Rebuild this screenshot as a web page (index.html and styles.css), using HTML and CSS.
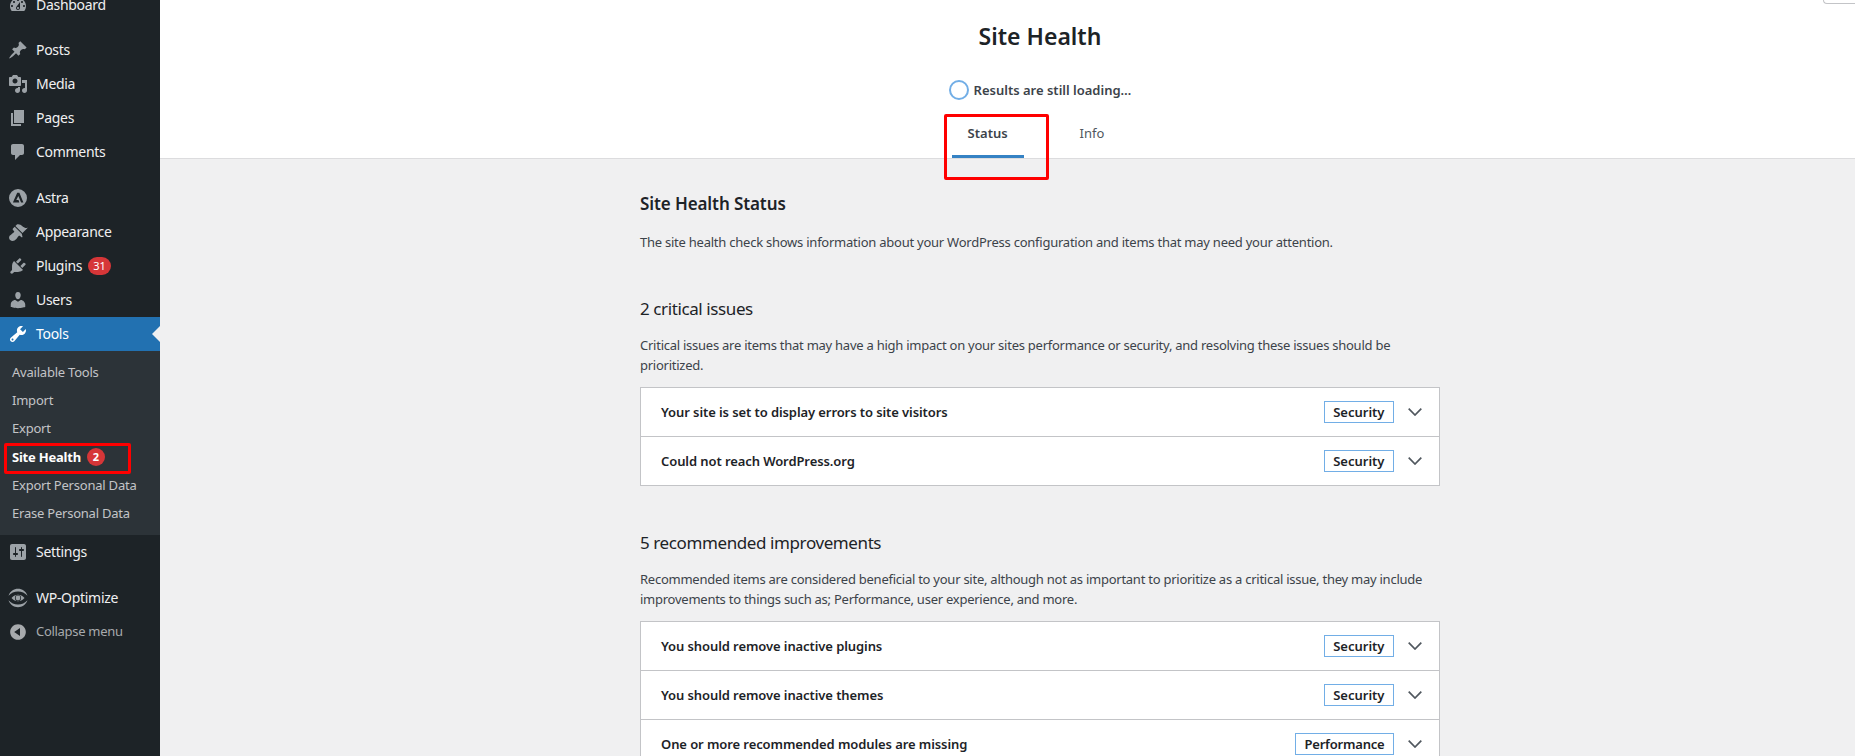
FILE: index.html
```html
<!DOCTYPE html>
<html lang="en">
<head>
<meta charset="utf-8">
<title>Site Health</title>
<link rel="stylesheet" href="styles.css">
</head>
<body>
<aside class="sidebar">
  <ul class="menu">
    <li class="item"><svg class="ico" viewBox="0 0 20 20"><path d="M3.76 16h12.48c1.1-1.37 1.76-3.11 1.76-5 0-4.42-3.58-8-8-8s-8 3.58-8 8c0 1.89.66 3.63 1.76 5zM10 4c.55 0 1 .45 1 1s-.45 1-1 1-1-.45-1-1 .45-1 1-1zM6 6c.55 0 1 .45 1 1s-.45 1-1 1-1-.45-1-1 .45-1 1-1zm8 0c.55 0 1 .45 1 1s-.45 1-1 1-1-.45-1-1 .45-1 1-1zm-5.37 5.55L12 7v6c0 1.1-.9 2-2 2s-2-.9-2-2c0-.57.24-1.08.63-1.45zM4 10c.55 0 1 .45 1 1s-.45 1-1 1-1-.45-1-1 .45-1 1-1zm12 0c.55 0 1 .45 1 1s-.45 1-1 1-1-.45-1-1 .45-1 1-1zm-5 3c0-.55-.45-1-1-1s-1 .45-1 1 .45 1 1 1 1-.45 1-1z" fill-rule="evenodd"/></svg><span>Dashboard</span></li>
    <li class="item sep-first"><svg class="ico" viewBox="0 0 20 20"><path d="M10.44 3.02l1.82-1.82 6.36 6.35-1.83 1.82c-1.05-.68-2.48-.57-3.41.36l-.75.75c-.92.93-1.04 2.35-.35 3.41l-1.83 1.82-2.41-2.41-2.8 2.79c-.42.42-3.38 2.71-3.8 2.29s1.86-3.39 2.28-3.81l2.79-2.79L4.1 9.36l1.83-1.82c1.05.69 2.48.57 3.4-.36l.75-.75c.93-.92 1.05-2.35.36-3.41z"/></svg><span>Posts</span></li>
    <li class="item"><svg class="ico" viewBox="0 0 20 20"><path d="M13 11V4c0-.55-.45-1-1-1h-1.67L9 1H5L3.67 3H2c-.55 0-1 .45-1 1v7c0 .55.45 1 1 1h10c.55 0 1-.45 1-1zM7 4.5c1.38 0 2.5 1.12 2.5 2.5S8.38 9.5 7 9.5 4.5 8.38 4.5 7 5.62 4.5 7 4.5zM14 6h5v10.5c0 1.38-1.12 2.5-2.5 2.5S14 17.88 14 16.5s1.12-2.5 2.5-2.5c.17 0 .34.02.5.05V9h-3V6zm-4 8.05V13h2v3.5c0 1.38-1.12 2.5-2.5 2.5S7 17.88 7 16.5 8.12 14 9.5 14c.17 0 .34.02.5.05z" fill-rule="evenodd"/></svg><span>Media</span></li>
    <li class="item"><svg class="ico" viewBox="0 0 20 20"><path d="M6 15V2h10v13H6zm-1 1h8v2H3V5h2v11z"/></svg><span>Pages</span></li>
    <li class="item"><svg class="ico" viewBox="0 0 20 20"><path d="M5 2h9c1.1 0 2 .9 2 2v7c0 1.1-.9 2-2 2h-2l-5 5v-5H5c-1.1 0-2-.9-2-2V4c0-1.1.9-2 2-2z"/></svg><span>Comments</span></li>
    <li class="item sep"><svg class="ico" viewBox="0 0 20 20"><path d="M10 1a9 9 0 1 0 0 18 9 9 0 0 0 0-18zM9.200 4.800h2.200l4 9.700h-2.300l-2.800-6.600-2 4.200h2.200l.8 2.400H4.900z" fill-rule="evenodd"/></svg><span>Astra</span></li>
    <li class="item"><svg class="ico" viewBox="0 0 20 20"><path d="M14.48 11.06L7.41 3.99l1.5-1.5c.5-.56 2.3-.47 3.51.32 1.21.8 1.43 1.28 2.91 2.1 1.18.64 2.45 1.26 4.45.85zm-.71.71L6.7 4.7 4.93 6.47c-.39.39-.39 1.02 0 1.41l1.06 1.06c.39.39.39 1.03 0 1.42-.6.6-1.43 1.11-2.21 1.69-.35.26-.7.53-1.01.84C1.43 13.23.18 15.7 2.1 17.9c2.2 1.92 4.67.67 6.01-.67.31-.31.58-.66.84-1.01.58-.78 1.09-1.61 1.69-2.21.39-.39 1.03-.39 1.42 0l1.06 1.06c.39.39 1.02.39 1.41 0z"/></svg><span>Appearance</span></li>
    <li class="item"><svg class="ico" viewBox="0 0 20 20"><path d="M13.11 4.36L9.87 7.6 8 5.73l3.24-3.24c.35-.34 1.05-.2 1.56.32.52.51.66 1.21.31 1.55zm-8 1.77l.91-1.12 9.01 9.01-1.19.84c-.71.71-2.63 1.16-3.82 1.16H6.14L4.9 17.26c-.59.59-1.54.59-2.12 0-.59-.58-.59-1.53 0-2.12l1.24-1.24v-3.88c0-1.13.4-3.19 1.09-3.89zm7.26 3.97l3.24-3.24c.34-.35 1.04-.21 1.55.31.52.51.66 1.21.31 1.55l-3.24 3.25z"/></svg><span>Plugins</span><b class="count">31</b></li>
    <li class="item"><svg class="ico" viewBox="0 0 20 20"><path d="M10 9.25c-2.27 0-2.73-3.44-2.73-3.44C7 4.02 7.82 2 9.97 2c2.16 0 2.98 2.02 2.71 3.81 0 0-.41 3.44-2.68 3.44zm0 2.57L12.72 10c2.39 0 4.52 2.33 4.52 4.53v2.49s-3.65 1.13-7.24 1.13c-3.65 0-7.24-1.13-7.24-1.13v-2.49c0-2.25 1.94-4.48 4.47-4.48z"/></svg><span>Users</span></li>
    <li class="item current"><svg class="ico" viewBox="0 0 20 20"><path d="M16.68 9.77c-1.34 1.34-3.3 1.67-4.95.99l-5.41 6.52c-.99.99-2.59.99-3.58 0s-.99-2.59 0-3.57l6.52-5.42c-.68-1.65-.35-3.61.99-4.95 1.28-1.28 3.12-1.62 4.72-1.06l-2.89 2.89 2.82 2.82 2.86-2.87c.53 1.58.18 3.39-1.08 4.65zM3.81 16.21c.4.39 1.04.39 1.43 0 .4-.4.4-1.04 0-1.43-.39-.4-1.03-.4-1.43 0-.39.39-.39 1.03 0 1.43z" fill-rule="evenodd"/></svg><span>Tools</span></li>
    <li class="submenu">
      <div class="sub">Available Tools</div>
      <div class="sub">Import</div>
      <div class="sub">Export</div>
      <div class="sub sub-on">Site Health<b class="count count-sub">2</b></div>
      <div class="sub">Export Personal Data</div>
      <div class="sub">Erase Personal Data</div>
    </li>
    <li class="item"><svg class="ico" viewBox="0 0 20 20"><path d="M18 16V4c0-1.1-.9-2-2-2H4c-1.1 0-2 .9-2 2v12c0 1.1.9 2 2 2h12c1.1 0 2-.9 2-2zM8 11h1c.55 0 1 .45 1 1s-.45 1-1 1H8v1.5c0 .28-.22.5-.5.5s-.5-.22-.5-.5V13H6c-.55 0-1-.45-1-1s.45-1 1-1h1V5.5c0-.28.22-.5.5-.5s.5.22.5.5V11zm5-2h-1c-.55 0-1-.45-1-1s.45-1 1-1h1V5.5c0-.28.22-.5.5-.5s.5.22.5.5V7h1c.55 0 1 .45 1 1s-.45 1-1 1h-1v5.5c0 .28-.22.5-.5.5s-.5-.22-.5-.5V9z" fill-rule="evenodd"/></svg><span>Settings</span></li>
    <li class="item sep"><svg class="ico" viewBox="0 1 20 20"><path d="M.5 8.700C2.300 4 5.800 1.800 10 1.800s7.700 2.200 9.500 6.900c-2.500-2.800-5.700-4.300-9.500-4.300S3 5.900.5 8.700zM.5 13.300C2.300 18 5.800 20.200 10 20.200s7.700-2.200 9.500-6.900c-2.500 2.800-5.700 4.300-9.500 4.300S3 16.100.5 13.300z"/><path d="M3.500 11C5.500 8.800 7.700 7.700 10 7.700s4.500 1.100 6.500 3.300c-2 2.200-4.200 3.300-6.500 3.300S5.500 13.200 3.500 11zM10 7.900a3.100 3.100 0 1 0 0 6.200 3.100 3.100 0 0 0 0-6.200zM10 8.600a2.400 2.400 0 1 1 0 4.800 2.400 2.400 0 0 1 0-4.800z" fill-rule="evenodd"/></svg><span>WP-Optimize</span></li>
    <li class="item collapse"><svg class="ico" viewBox="0 0 20 20"><path d="M10 2.160c4.330 0 7.840 3.510 7.840 7.840s-3.510 7.840-7.840 7.840S2.160 14.330 2.160 10 5.710 2.160 10 2.160zm2 11.720V6.120L6.180 9.970z" fill-rule="evenodd"/></svg><span>Collapse menu</span></li>
  </ul>
</aside>

<main class="page">
  <header class="head">
    <h1 class="title">Site Health</h1>
    <div class="progress"><span class="ring"></span><strong>Results are still loading…</strong></div>
    <nav class="tabs">
      <a class="tab tab-on">Status</a>
      <a class="tab">Info</a>
    </nav>
  </header>
  <section class="body">
    <h2 class="h-status">Site Health Status</h2>
    <p class="lead">The site health check shows information about your WordPress configuration and items that may need your attention.</p>

    <h3 class="h-group">2 critical issues</h3>
    <p class="desc">Critical issues are items that may have a high impact on your sites performance or security, and resolving these issues should be prioritized.</p>
    <div class="box">
      <div class="row"><span class="row-title">Your site is set to display errors to site visitors</span><span class="badge">Security</span><svg class="chev" viewBox="0 0 14 8"><path d="M.7.7 7 7 13.300.7"/></svg></div>
      <div class="row"><span class="row-title">Could not reach WordPress.org</span><span class="badge">Security</span><svg class="chev" viewBox="0 0 14 8"><path d="M.7.7 7 7 13.300.7"/></svg></div>
    </div>

    <h3 class="h-group">5 recommended improvements</h3>
    <p class="desc">Recommended items are considered beneficial to your site, although not as important to prioritize as a critical issue, they may include improvements to things such as; Performance, user experience, and more.</p>
    <div class="box">
      <div class="row"><span class="row-title">You should remove inactive plugins</span><span class="badge">Security</span><svg class="chev" viewBox="0 0 14 8"><path d="M.7.7 7 7 13.300.7"/></svg></div>
      <div class="row"><span class="row-title">You should remove inactive themes</span><span class="badge">Security</span><svg class="chev" viewBox="0 0 14 8"><path d="M.7.7 7 7 13.300.7"/></svg></div>
      <div class="row"><span class="row-title">One or more recommended modules are missing</span><span class="badge badge-wide">Performance</span><svg class="chev" viewBox="0 0 14 8"><path d="M.7.7 7 7 13.300.7"/></svg></div>
    </div>
  </section>
</main>

<div class="screen-tab"></div>
<div class="mark mark-tab"></div>
<div class="mark mark-side"></div>
</body>
</html>
```
FILE: styles.css
```css
* { box-sizing: border-box; }
html, body { margin: 0; height: 756px; overflow: hidden; }
body {
  display: flex;
  background: #f0f0f1;
  color: #3c434a;
  font-family: "Noto Sans", "Open Sans", sans-serif;
  font-size: 13px;
  position: relative;
}
.sidebar { flex: 0 0 160px; width: 160px; height: 756px; background: #1d2327; overflow: hidden; }
.menu { list-style: none; margin: -12px 0 0; padding: 0; }
.item {
  display: flex; align-items: center; height: 34px;
  padding-left: 8px; gap: 8px;
  color: #f0f0f1; font-size: 14px; letter-spacing: -0.3px; position: relative;
}
.item span { padding-bottom: 2px; }
.item .ico { width: 20px; height: 20px; fill: #9ca2a7; color: #9ca2a7; flex: none; }
.sep-first { margin-top: 11px; }
.sep { margin-top: 12px; }
.current { background: #2271b1; color: #fff; }
.current .ico { fill: #fff; }
.current::after {
  content: ""; position: absolute; right: 0; top: 50%; margin-top: -8px;
  border: 8px solid transparent; border-right-color: #f0f0f1; border-left-width: 0;
}
.count {
  display: inline-block; margin-left: -2px; min-width: 18px; height: 18px; padding: 0 5px;
  border-radius: 9px; background: #d63638; color: #fff; letter-spacing: 0;
  font-size: 11px; font-weight: 400; line-height: 18px; text-align: center;
}
.count-sub { margin-left: 6px; font-weight: 700; padding: 0 4px; }
.submenu { background: #2c3338; padding: 7px 0 8px; }
.sub { display: flex; align-items: center; height: 28.2px; padding-left: 12px; color: #c3c4c7; font-size: 13px; letter-spacing: -0.22px; }
.sub-on { color: #fff; font-weight: 700; }
.collapse { color: #a7aaad; font-size: 13px; }
.collapse .ico { fill: #a7aaad; }

.page { flex: 0 0 1760px; width: 1760px; }
.head { background: #fff; border-bottom: 1px solid #dcdcde; height: 159px; text-align: center; padding-top: 20px; }
.title { margin: 0; font-size: 23px; line-height: 32px; font-weight: 600; color: #1d2327; }
.progress { display: flex; justify-content: center; align-items: center; gap: 5px; margin-top: 28px; height: 20px; }
.progress strong { font-weight: 600; color: #3c434a; font-size: 13px; }
.ring { width: 20px; height: 20px; border-radius: 50%; border: 2px solid #72aee6; }
.tabs { display: flex; justify-content: center; gap: 40px; margin-top: 11px; height: 47px; padding-right: 8px; }
.tab { display: flex; align-items: center; height: 47px; padding: 0 16px; color: #50575e; border-bottom: 3px solid transparent; }
.tab-on { font-weight: 600; color: #3c434a; border-bottom-color: #3582c4; }

.body { width: 800px; margin: 0 auto; padding-top: 33px; }
.h-status { margin: 0; font-size: 17px; line-height: 24px; font-weight: 600; letter-spacing: -0.1px; color: #1d2327; }
.lead { margin: 16px 0 0; line-height: 20px; letter-spacing: -0.24px; }
.h-group { margin: 45px 0 0; font-size: 17px; line-height: 24px; font-weight: 400; letter-spacing: -0.4px; color: #1d2327; }
.desc { margin: 15px 0 12px; line-height: 19.5px; letter-spacing: -0.25px; }
.box { background: #fff; border: 1px solid #c3c4c7; }
.row { display: flex; align-items: center; height: 48px; padding: 0 17px 0 20px; }
.row + .row { border-top: 1px solid #c3c4c7; height: 49px; }
.row-title { flex: 1; font-weight: 600; letter-spacing: -0.09px; color: #1d2327; }
.badge { height: 22px; line-height: 20px; padding: 0 8.5px; border: 1px solid #72aee6; font-weight: 600; color: #1d2327; }
.badge-wide { letter-spacing: -0.2px; }
.chev { width: 14px; height: 8px; margin-left: 14px; fill: none; stroke: #50575e; stroke-width: 1.7; }

.screen-tab {
  position: absolute; top: -6px; right: 0; width: 32px; height: 10px;
  border-left: 1px solid #c3c4c7; border-bottom: 1px solid #c3c4c7; border-bottom-left-radius: 4px;
}
.mark { position: absolute; border: 3px solid #f00; border-radius: 2px; }
.mark-tab { left: 944px; top: 114px; width: 105px; height: 66px; }
.mark-side { left: 4px; top: 443px; width: 127px; height: 31px; }
```
